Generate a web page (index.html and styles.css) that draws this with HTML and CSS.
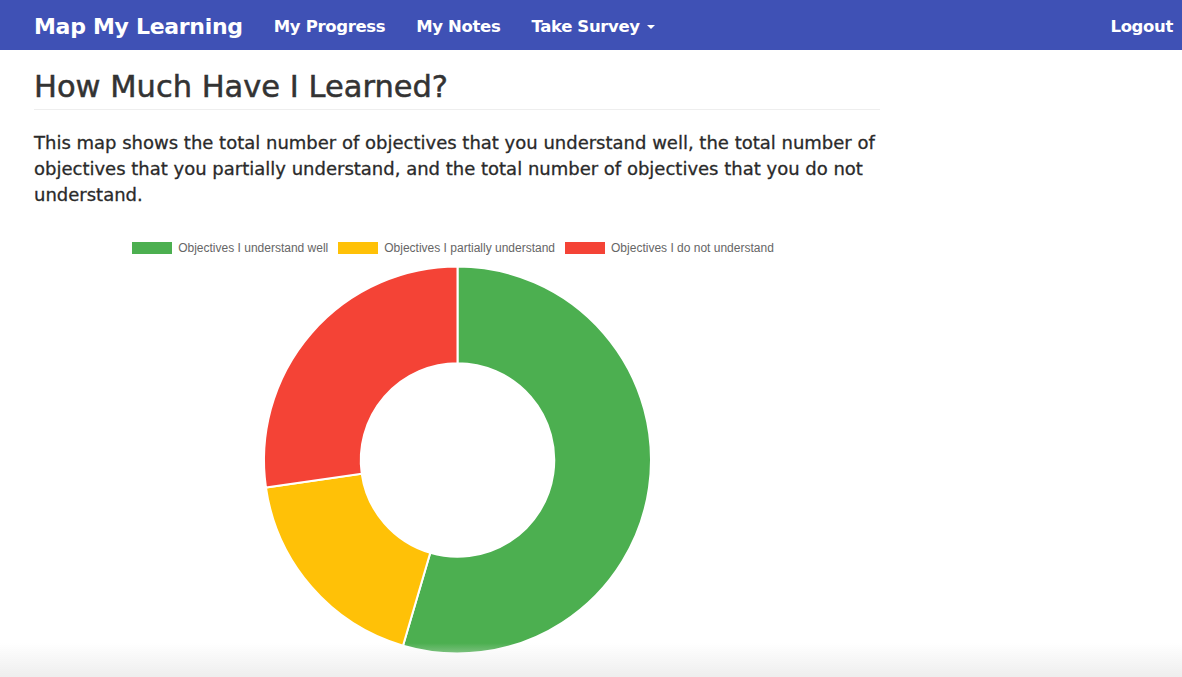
FILE: index.html
```html
<!DOCTYPE html>
<html>
<head>
<meta charset="utf-8">
<link rel="stylesheet" href="styles.css">
</head>
<body>
<nav class="navbar">
  <div class="nav-left">
    <a class="brand">Map My Learning</a>
    <a class="nav-link">My Progress</a>
    <a class="nav-link">My Notes</a>
    <a class="nav-link">Take Survey <span class="caret"></span></a>
  </div>
  <a class="nav-link logout">Logout</a>
</nav>
<main class="content">
  <h1 class="page-header">How Much Have I Learned?</h1>
  <p class="intro">This map shows the total number of objectives that you understand well, the total number of objectives that you partially understand, and the total number of objectives that you do not understand.</p>
  <div class="chart">
    <div class="legend">
      <div class="legend-item"><span class="swatch green"></span>Objectives I understand well</div>
      <div class="legend-item"><span class="swatch yellow"></span>Objectives I partially understand</div>
      <div class="legend-item"><span class="swatch red"></span>Objectives I do not understand</div>
    </div>
    <svg class="donut" width="846" height="400" viewBox="0 0 846 400">
      <path fill="#4CAF50" stroke="#fff" stroke-width="2" d="M 423.5 1.5 A 193.5 193.5 0 1 1 368.99 380.67 L 396.25 287.83 A 96.75 96.75 0 1 0 423.5 98.25 Z"/>
      <path fill="#FFC107" stroke="#fff" stroke-width="2" d="M 368.99 380.67 A 193.5 193.5 0 0 1 231.97 222.53 L 327.74 208.77 A 96.75 96.75 0 0 0 396.25 287.83 Z"/>
      <path fill="#F44336" stroke="#fff" stroke-width="2" d="M 231.97 222.53 A 193.5 193.5 0 0 1 423.5 1.5 L 423.5 98.25 A 96.75 96.75 0 0 0 327.74 208.77 Z"/>
    </svg>
  </div>
</main>
<div class="bottom-fade"></div>
</body>
</html>
```
FILE: styles.css
```css
html, body {
  margin: 0;
  padding: 0;
  background: #fff;
  overflow: hidden;
  height: 677px;
}
body {
  font-family: "DejaVu Sans", "Liberation Sans", sans-serif;
  color: #333;
}
.navbar {
  height: 50px;
  box-sizing: border-box;
  padding: 2px 9px 0 34px;
  background: #3F51B5;
  display: flex;
  align-items: center;
  justify-content: space-between;
}
.nav-left {
  display: flex;
  align-items: center;
}
.brand {
  color: #fff;
  font-size: 22px;
  font-weight: bold;
  margin-right: 31px;
  letter-spacing: -0.3px;
}
.nav-link {
  color: #fff;
  font-size: 16.5px;
  font-weight: bold;
  margin-right: 31px;
  letter-spacing: -0.35px;
}
.logout {
  margin-right: 0;
}
.caret {
  display: inline-block;
  width: 0;
  height: 0;
  border-left: 4px solid transparent;
  border-right: 4px solid transparent;
  border-top: 4px solid #fff;
  vertical-align: middle;
  margin-left: 2px;
}
.content {
  width: 846px;
  padding: 0 34px;
}
.page-header {
  font-size: 30.5px;
  font-weight: normal;
  margin: 20px 0 20px;
  padding-bottom: 5px;
  line-height: 1.1;
  border-bottom: 1px solid #eee;
  color: #333;
  -webkit-text-stroke: 0.5px #333;
}
.intro {
  font-size: 18px;
  line-height: 26px;
  margin: 0 0 24px;
  color: #2a2a2a;
  -webkit-text-stroke: 0.3px #2a2a2a;
}
.chart {
  width: 846px;
}
.legend {
  display: flex;
  justify-content: center;
  gap: 10px;
  padding-right: 8px;
  height: 33px;
  align-items: center;
  font-family: "Liberation Sans", Arial, sans-serif;
  font-size: 12px;
  color: #666;
}
.legend-item {
  display: flex;
  align-items: center;
}
.swatch {
  display: inline-block;
  width: 40px;
  height: 12px;
  margin-right: 6px;
}
.green { background: #4CAF50; }
.yellow { background: #FFC107; }
.red { background: #F44336; }
.donut {
  display: block;
}
.bottom-fade {
  position: fixed;
  left: 0;
  right: 0;
  bottom: 0;
  height: 34px;
  background: linear-gradient(to bottom, rgba(240,240,240,0), #eeeeee);
  pointer-events: none;
}
```
